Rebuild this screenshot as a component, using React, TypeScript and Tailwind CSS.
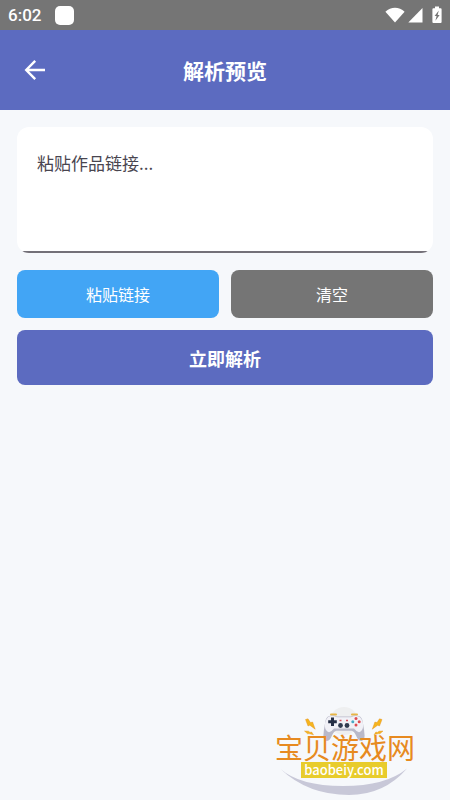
import { useState } from "react";

function StatusBar() {
  return (
    <div className="flex h-[30px] items-center bg-[#757575] pl-2 pr-2 text-white">
      <span className="font-['Roboto',sans-serif] text-[17px] font-medium leading-5 text-white">6:02</span>
      <span className="ml-[14px] size-[19px] rounded-[5px] bg-white" />
      <svg className="ml-auto h-4 w-[20px]" viewBox="0 0 20 16" fill="currentColor" aria-hidden="true">
        <path d="M0.4 4.8C5.8-0.6 14.2-0.6 19.6 4.8L10 15.6z" />
      </svg>
      <svg className="ml-[3px] h-4 w-[15px]" viewBox="0 0 15 16" fill="currentColor" aria-hidden="true">
        <path d="M14.5 1v14.4H0.3z" />
      </svg>
      <svg className="ml-[9px] h-[18px] w-[10px]" viewBox="0 0 10 18" aria-hidden="true">
        <path d="M3 0.4h4v1.8h1.6q1 0 1 1v12.9q0 1-1 1H1.4q-1 0-1-1V3.2q0-1 1-1H3z" fill="currentColor" />
        <path d="M6.8 4.6 2.6 10h2L3.4 14.8 7.6 9H5.6z" fill="#757575" />
      </svg>
    </div>
  );
}

function Header() {
  return (
    <header className="grid h-20 grid-cols-[1fr_auto_1fr] items-center bg-[#5c6bc0] px-[22px] text-white">
      <button type="button" aria-label="返回" className="justify-self-start">
        <svg className="size-[26px]" viewBox="0 0 26 26" fill="none" stroke="currentColor" strokeWidth="2.4" aria-hidden="true">
          <path d="M23 13H5M13.2 3.8 4.2 13l9 9.2" />
        </svg>
      </button>
      <h1 className="text-[21px] font-bold leading-7">解析预览</h1>
    </header>
  );
}

function Bolts() {
  return (
    <g fill="#f5b51e" stroke="#e08a1c" strokeWidth="0.4">
      <path d="M33.5 15.500 36 14.800 38.500 18.600 40.600 18 43.200 25.200 37.800 21.200 36 22z" />
      <path d="M32.500 27 36.500 27.200 38 28.400 39.600 28 41.500 30.800 37 29.600 35.600 29.800z" />
      <path d="M110 15.500 107.500 14.800 105 18.600 102.900 18 100.300 25.200 105.700 21.200 107.500 22z" />
      <path d="M111 27 107 27.200 105.500 28.400 103.900 28 102 30.800 106.500 29.600 107.900 29.800z" />
    </g>
  );
}

function Gamepad() {
  return (
    <g>
      <circle cx="72" cy="17" r="14" fill="#eeeff0" />
      <path d="M59 10.500h5M80 10.500h5" stroke="#e8b545" strokeWidth="2" strokeLinecap="round" />
      <path
        d="M56 12.500Q60 10.500 65 12.500h14q5-2 9 0 2.600 2 3 7 1.200 6 1.600 12 0 4.500-3 5.500-3.400 0-5.600-5.500-1.600-4-4.500-4.800h-15q-2.900.8-4.500 4.800Q57.800 37 54.400 37q-3-1-3-5.500.4-6 1.600-12 .4-5 3-7z"
        fill="#b9b9c9"
      />
      <path
        d="M56 13Q60 11 65 13.200h14q5-2.200 9 0 3.200 3 3.200 9-.7 5-4.200 6-3-.8-5-3.600H62q-2 2.800-5 3.600-3.500-1-4.200-6 0-6 3.200-9z"
        fill="#f1f1f7"
      />
      <path d="M59 13.500h3v2.800h2.800v3H62v2.800h-3v-2.800h-2.800v-3H59z" fill="#252f46" />
      <g fill="#303b50">
        <circle cx="68.500" cy="21.500" r="2.400" />
        <circle cx="75" cy="21.500" r="2.400" />
      </g>
      <path d="M67.500 16.500h2M74 16.500h2" stroke="#d8505c" strokeWidth="1.400" />
      <circle cx="84" cy="14.600" r="1.500" fill="#df4b52" />
      <circle cx="84" cy="21" r="1.500" fill="#df4b52" />
      <circle cx="80.800" cy="17.800" r="1.500" fill="#48a9c4" />
      <circle cx="87.200" cy="17.800" r="1.500" fill="#df4b52" />
    </g>
  );
}

function SiteLogo() {
  return (
    <svg
      className="pointer-events-none absolute bottom-0.5 right-[34px] h-[94px] w-36"
      viewBox="0 0 144 94"
      role="img"
      aria-label="宝贝游戏网 baobeiy.com"
    >
      <path d="M8.500 65Q28 82 71 82T135 64.500Q112 91 77 91 36 91 8.500 65z" fill="#c8c8d8" />
      <Bolts />
      <Gamepad />
      <text
        x="73"
        y="55"
        textAnchor="middle"
        className="fill-[#e78a20] font-['Noto_Sans_CJK_SC',sans-serif] text-[28px]"
      >
        宝贝游戏网
      </text>
      <rect x="29" y="58" width="86" height="16" fill="#e8cc2c" />
      <text
        x="72"
        y="71"
        textAnchor="middle"
        className="fill-white font-['Noto_Sans_CJK_SC',sans-serif] text-[13px] font-medium"
      >
        baobeiy.com
      </text>
    </svg>
  );
}

export default function App() {
  const [link, setLink] = useState("");

  return (
    <div className="relative flex min-h-screen flex-col bg-[#f6f8fb] font-['Noto_Sans_CJK_SC',sans-serif]">
      <StatusBar />
      <Header />
      <main className="flex flex-col gap-3 px-[17px] pt-[17px]">
        <div className="mb-[5px] flex overflow-hidden rounded-xl bg-white">
          <textarea
            aria-label="作品链接"
            value={link}
            onChange={(e) => setLink(e.target.value)}
            placeholder="粘贴作品链接..."
            className="h-[126px] w-full resize-none border-b-2 border-[#737078] px-5 py-6 text-[17px] leading-6 text-[#49454f] outline-none placeholder:text-[#49454f]"
          />
        </div>
        <div className="grid grid-cols-2 gap-3 text-base text-white">
          <button type="button" className="h-12 rounded-lg bg-[#42a5f5]">
            粘贴链接
          </button>
          <button type="button" onClick={() => setLink("")} className="h-12 rounded-lg bg-[#757575]">
            清空
          </button>
        </div>
        <button type="button" className="h-[55px] rounded-lg bg-[#5c6bc0] text-lg font-bold text-white">
          立即解析
        </button>
      </main>
      <SiteLogo />
    </div>
  );
}
